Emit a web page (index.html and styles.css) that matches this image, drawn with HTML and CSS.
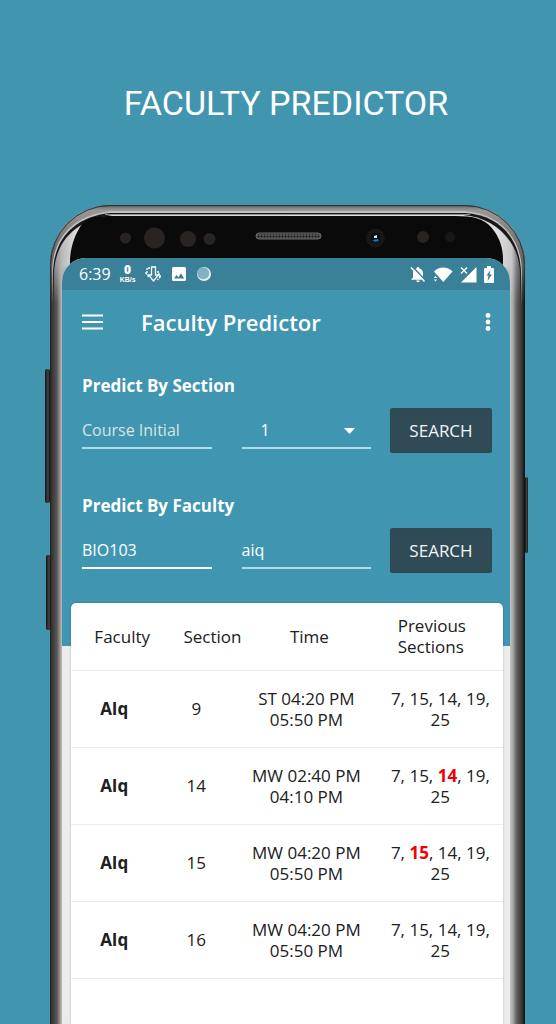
FILE: index.html
```html
<!DOCTYPE html>
<html lang="en">
<head>
<meta charset="utf-8">
<meta name="viewport" content="width=device-width, initial-scale=1">
<title>Faculty Predictor</title>
<link rel="stylesheet" href="styles.css">
</head>
<body>
<h1 class="headline">FACULTY PREDICTOR</h1>
<main class="phone">
  <span class="key key-volume"></span>
  <span class="key key-assistant"></span>
  <span class="key key-power"></span>
  <svg class="bezel" viewBox="0 0 475 100" preserveAspectRatio="none" aria-hidden="true">
    <defs>
      <linearGradient id="rim" x1="0" y1="0" x2="0" y2="1">
        <stop offset="0" stop-color="#3a3838"/><stop offset=".02" stop-color="#777574"/><stop offset=".05" stop-color="#9a9897"/><stop offset=".5" stop-color="#6a6867"/><stop offset="1" stop-color="#4a4847"/>
      </linearGradient>
      <linearGradient id="silverL" gradientUnits="userSpaceOnUse" x1="4" x2="24"><stop offset="0" stop-color="#8a8a8a"/><stop offset=".4" stop-color="#bababa"/><stop offset="1" stop-color="#d8d8d8"/></linearGradient>
      <linearGradient id="silverR" gradientUnits="userSpaceOnUse" x1="448" x2="471"><stop offset="0" stop-color="#dedede"/><stop offset=".6" stop-color="#c6c6c6"/><stop offset=".8" stop-color="#858585"/><stop offset="1" stop-color="#555"/></linearGradient>
      <linearGradient id="fade" x1="0" y1="0" x2="0" y2="1"><stop offset=".6" stop-color="#fff"/><stop offset="1" stop-color="#000"/></linearGradient>
      <mask id="fadeMask"><rect width="475" height="100" fill="url(#fade)"/></mask>
      <pattern id="mesh" width="3" height="3" patternUnits="userSpaceOnUse"><rect width="3" height="3" fill="#555"/><circle cx="1.5" cy="1.5" r="1" fill="#171717"/></pattern>
    </defs>
    <g mask="url(#fadeMask)">
      <path d="M0 100V60A60 60 0 0 1 60 0H415A60 60 0 0 1 475 60V100Z" fill="url(#rim)"/>
      <path d="M.5 100V60.500A60 60 0 0 1 60 .5H415A60 60 0 0 1 474.500 60.500V100" fill="none" stroke="#353332"/>
      <path d="M2 100V66C3 33 22 11 60 6H415C450 9 471 32 472 66V100Z" fill="#c2c2c2"/>
      <path d="M3 100V67C4 35 23 12 60 8H415C450 10 470 34 471 67V100Z" fill="#191919"/>
      <path d="M4 100V68C5 38 24 15 62 10H238V100Z" fill="url(#silverL)"/>
      <path d="M238 100V10H413C444 12 469 36 470 67V100Z" fill="url(#silverR)"/>
    </g>
    <path d="M20 70V54C21 41 25 29 32 19C37 13 45 11 62 11H405C424 11 434 14 441 22C449 31 453 42 453 54V70Z" fill="#0b0a0a"/>
    <path d="M55 9.500H420" stroke="#879494" stroke-width="1"/>
    <g fill="#292322">
      <circle cx="75.500" cy="33" r="5.500"/><circle cx="104.500" cy="33" r="10.500"/><circle cx="138" cy="34" r="8"/><circle cx="159.500" cy="34" r="6"/><circle cx="373" cy="32" r="6"/><circle cx="400" cy="32" r="5" fill="#1c1717"/>
    </g>
    <rect x="206" y="28" width="65" height="6" rx="3" fill="url(#mesh)" stroke="#6a6a68"/>
    <circle cx="325.500" cy="33" r="9.500" fill="#171717"/><circle cx="325.500" cy="33" r="5" fill="#090b0e"/>
    <path d="M324 31l3-1v3h-3z" fill="#dde9ee"/><path d="M322 35l6-1 1 2-4 1z" fill="#1773aa"/>
  </svg>
  <div class="screen">
    <header class="status">
      <div class="status-group">
        <time>6:39</time>
        <span class="speed"><b>0</b><small>KB/s</small></span>
        <svg width="17" height="17" viewBox="0 0 17 17" fill="none" stroke="#fff" stroke-width="1.300" aria-hidden="true"><path d="M6.500 1h4v8h3l-5 6-5-6h3z"/><path d="M5 2H2v5H.8l3 4M12 6h2v4h2l-3.500 4" stroke-dasharray="2 1"/></svg>
        <svg class="photo" width="14" height="14" viewBox="0 0 14 14" aria-label="Picture"><rect width="14" height="14" rx="1.500" fill="#fff"/><path d="M2 11.500l2.500-3.500 2 2.200 2.500-4 3.200 5.300z" fill="#3a8098"/></svg>
        <svg width="16" height="16" viewBox="0 0 16 16" aria-hidden="true"><circle cx="8" cy="8" r="7" fill="#e5f0f3"/><circle cx="7.200" cy="7.200" r="6" fill="#80b2c3"/></svg>
      </div>
      <div class="status-group status-right">
        <svg width="16" height="17" viewBox="0 0 16 17" aria-label="Muted"><path d="M8 1c.8 0 1.200.6 1.200 1.300 2.300.6 3.800 2.400 3.800 5v4.200l2 2.200H1l2-2.200V7.300c0-2.600 1.500-4.400 3.800-5C6.800 1.600 7.200 1 8 1zM6.300 14.600h3.400c0 2.300-3.400 2.300-3.400 0z" fill="#fff"/><path d="M2.500 .5l13 14" stroke="#3a8098" stroke-width="1.500"/><path d="M1 1.500l13.500 14" stroke="#fff" stroke-width="1.500"/></svg>
        <svg width="20" height="17" viewBox="0 0 20 17" aria-label="Wi-Fi"><path d="M1 5.500C6 .3 14.500.3 19.500 5.500L10.300 16z" fill="#fff"/><path d="M.8 12l1.700-2 1.700 2zM.8 13.500l1.700 2 1.700-2z" fill="#fff"/></svg>
        <svg width="17" height="17" viewBox="0 0 17 17" aria-label="No signal"><path d="M16.500 1v15.500H1z" fill="#fff"/><path d="M1 1.500l6 6M7 1.500l-6 6" stroke="#3a8098" stroke-width="3"/><path d="M1 1.500l6 6M7 1.500l-6 6" stroke="#fff" stroke-width="1.300"/></svg>
        <svg width="10" height="17" viewBox="0 0 10 17" aria-label="Charging"><path d="M3 0h4v2h2q1 0 1 1v13q0 1-1 1H1q-1 0-1-1V3q0-1 1-1h2z" fill="#fff"/><path d="M6.500 4L2.500 9.500h2L3.500 15 8 8.500H5.500z" fill="#3a8098"/></svg>
      </div>
    </header>
    <section class="app">
      <div class="toolbar">
        <button class="icon-button" aria-label="Menu"><svg width="21" height="16" viewBox="0 0 21 16"><path d="M0 1.500h21M0 8h21M0 14.500h21" stroke="#fff" stroke-width="2"/></svg></button>
        <h2 class="app-title">Faculty Predictor</h2>
        <button class="icon-button" aria-label="More options"><svg width="8" height="18" viewBox="0 0 8 18" fill="#fff"><circle cx="4" cy="2.500" r="2.400"/><circle cx="4" cy="9" r="2.400"/><circle cx="4" cy="15.500" r="2.400"/></svg></button>
      </div>
      <form class="predict">
        <h3 class="predict-title">Predict By Section</h3>
        <div class="predict-row">
          <div class="fields">
            <input class="field" type="text" aria-label="Course Initial" placeholder="Course Initial">
            <div class="select-wrap">
              <select class="field select" aria-label="Section"><option>1</option><option>2</option><option>3</option></select>
              <svg class="caret" width="11" height="6" viewBox="0 0 11 6" aria-hidden="true"><path d="M0 0h11L5.500 6z" fill="#fff"/></svg>
            </div>
          </div>
          <button class="search" type="button">SEARCH</button>
        </div>
      </form>
      <form class="predict">
        <h3 class="predict-title">Predict By Faculty</h3>
        <div class="predict-row">
          <div class="fields">
            <input class="field focused" type="text" aria-label="Course" value="BIO103">
            <input class="field" type="text" aria-label="Faculty initial" value="aiq">
          </div>
          <button class="search" type="button">SEARCH</button>
        </div>
      </form>
    </section>
    <section class="card">
      <table class="results">
        <thead>
          <tr><th class="col-faculty">Faculty</th><th class="col-section">Section</th><th class="col-time">Time</th><th class="col-previous">Previous<br>Sections</th></tr>
        </thead>
        <tbody>
          <tr><td><b>AIq</b></td><td>9</td><td>ST 04:20 PM<br>05:50 PM</td><td>7, 15, 14, 19,<br>25</td></tr>
          <tr><td><b>AIq</b></td><td>14</td><td>MW 02:40 PM<br>04:10 PM</td><td>7, 15, <b class="hit">14</b>, 19,<br>25</td></tr>
          <tr><td><b>AIq</b></td><td>15</td><td>MW 04:20 PM<br>05:50 PM</td><td>7, <b class="hit">15</b>, 14, 19,<br>25</td></tr>
          <tr><td><b>AIq</b></td><td>16</td><td>MW 04:20 PM<br>05:50 PM</td><td>7, 15, 14, 19,<br>25</td></tr>
        </tbody>
      </table>
    </section>
  </div>
</main>
</body>
</html>
```
FILE: styles.css
```css
* { box-sizing: border-box; }
body {
  margin: 0;
  min-height: 100vh;
  display: flex;
  flex-direction: column;
  background: #4195af;
  color: #fff;
  font-family: "Open Sans", "Noto Sans", sans-serif;
}
h1, h2, h3 { margin: 0; }
.headline {
  padding: 73px 0 72px 16px;
  text-align: center;
  font: 400 34px/60px "Roboto", sans-serif;
}
.phone {
  position: relative;
  flex: 1;
  display: flex;
  margin: 0 31px 0 50px;
  padding: 53px 15px 0 12px;
  border-radius: 60px 60px 0 0;
  background:
    linear-gradient(90deg, #222 0, #383635 2px, #595756 7px, #959594 10px, #bcbcbc 12px) left / 12px 100% no-repeat,
    linear-gradient(90deg, #c4c4c4 0, #a5a5a4 3px, #6c6a68 6px, #454342 10px, #3a3837 12px, #151515 14px) right / 15px 100% no-repeat;
}
.bezel { position: absolute; top: 0; left: 0; width: 100%; height: 100px; }
.key { position: absolute; background: linear-gradient(90deg, #111, #444 60%, #111); border-radius: 2px; }
.key-volume { left: -5px; top: 164px; width: 5px; height: 134px; }
.key-assistant { left: -4px; top: 350px; width: 5px; height: 75px; }
.key-power { right: -3px; top: 272px; width: 3px; height: 76px; }
.screen {
  position: relative;
  flex: 1;
  min-width: 0;
  display: flex;
  flex-direction: column;
  overflow: hidden;
  border-radius: 24px 24px 0 0;
  background: #ebebeb;
}
.status {
  height: 32px;
  display: flex;
  align-items: center;
  justify-content: space-between;
  padding: 0 16px 0 17px;
  background: #3a8098;
  font-size: 16px;
}
.status-group { display: flex; align-items: center; gap: 9px; }
.status-right { gap: 7px; }
.photo { margin: 0 1px; }
.speed { display: flex; flex-direction: column; align-items: center; font: 700 12px/12px "Open Sans", sans-serif; }
.speed small { font: 700 7px/8px "Liberation Sans", sans-serif; }
.app { padding: 0 18px 73px 20px; background: #4096b0; }
.toolbar { height: 64px; display: flex; align-items: center; }
.icon-button { display: flex; padding: 0; border: 0; background: none; }
.app-title { flex: 1; padding-left: 38px; font-size: 22px; line-height: 32px; font-weight: 600; }
.predict { padding-top: 20px; }
.predict + .predict { padding-top: 41px; }
.predict-title { font-size: 17px; line-height: 24px; font-weight: 700; }
.predict-row { display: flex; gap: 19px; padding-top: 10px; }
.fields { flex: 1; min-width: 0; display: flex; gap: 30px; height: 41px; }
.field {
  flex: 1;
  width: 100%;
  min-width: 0;
  height: 41px;
  padding: 5px 0 0;
  border: 0;
  border-bottom: 2px solid #b3dbe8;
  border-radius: 0;
  background: none;
  color: #fff;
  font: 400 16px/24px "Open Sans", sans-serif;
  outline: none;
}
.focused { border-bottom-color: #fff; }
.field::placeholder { color: #d7e5e9; opacity: 1; }
.select-wrap { position: relative; flex: 1; min-width: 0; }
.select { appearance: none; padding-left: 19px; }
.caret { position: absolute; right: 16px; top: 20px; pointer-events: none; }
.search {
  width: 102px;
  height: 45px;
  padding: 0;
  border: 1px solid #2b4a56;
  border-radius: 2px;
  background: #304a56;
  color: #f2f5f6;
  font: 400 17px/24px "Open Sans", sans-serif;
}
.card {
  flex: 1;
  margin: -43px 7px 0 9px;
  border-radius: 5px 5px 0 0;
  background: #fff;
  color: #202020;
  box-shadow: 0 0 2px rgba(0, 0, 0, .3);
}
.results {
  width: 100%;
  table-layout: fixed;
  border-collapse: collapse;
  font-size: 17px;
  line-height: 21px;
  text-align: center;
}
.results th, .results td { padding: 0; border-bottom: 1px solid #ececec; font-weight: 400; }
.results th { height: 67px; }
.results td { height: 77px; white-space: nowrap; }
.results .col-faculty { width: 20%; padding-left: 16px; }
.results .col-section { width: 18%; padding-left: 26px; }
.results .col-time { width: 33%; padding-left: 6px; }
.results .col-previous { width: 29%; padding-left: 20px; text-align: left; }
.hit { color: #f00000; }
```
